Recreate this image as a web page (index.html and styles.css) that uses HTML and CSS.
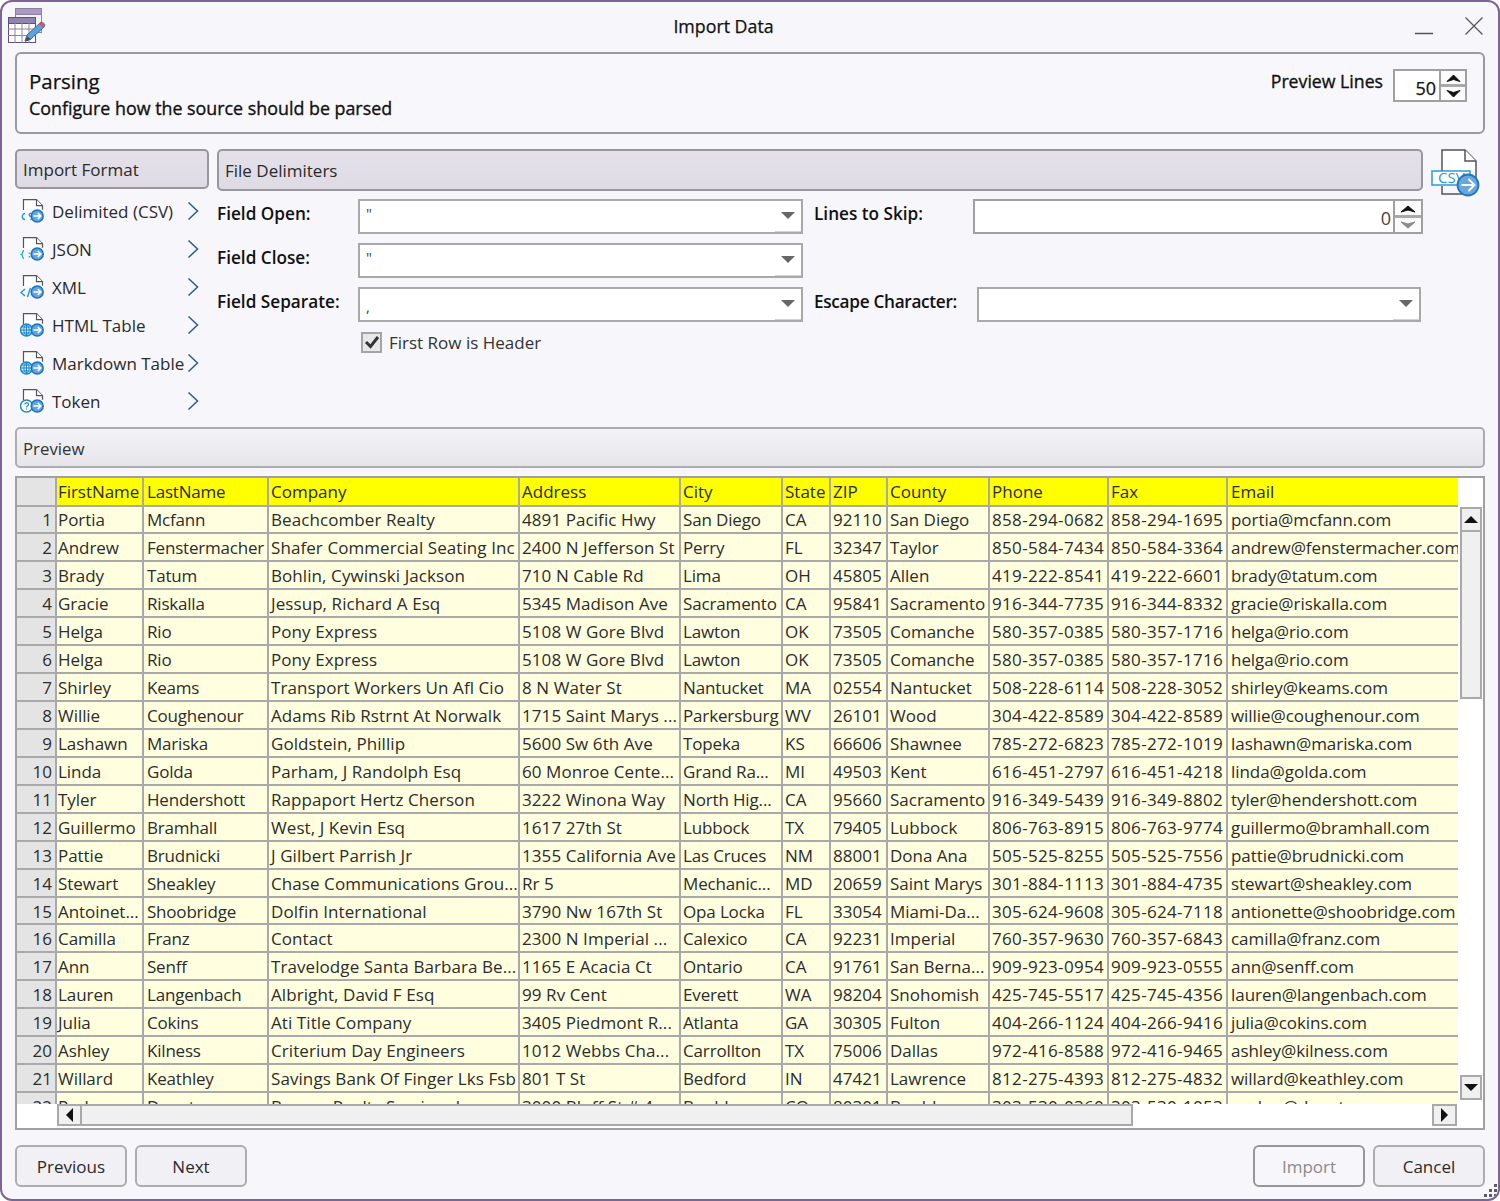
FILE: index.html
```html
<!DOCTYPE html>
<html lang="en">
<head>
<meta charset="utf-8">
<title>Import Data</title>
<link rel="stylesheet" href="styles.css">
</head>
<body>
<svg class="defs" width="0" height="0" aria-hidden="true">
  <symbol id="doc" viewBox="0 0 24 24">
    <path d="M3.500 11V.7h13l6 6v4" fill="#fff" stroke="#55535a" stroke-width="1.200"/>
    <path d="M16.500 .7v6h6" fill="#fff" stroke="#55535a" stroke-width="1.200"/>
  </symbol>
  <symbol id="go" viewBox="0 0 24 24">
    <circle cx="17.200" cy="17" r="6" fill="#63a5de" stroke="#1a72bd" stroke-width="1.500"/>
    <path d="M13.500 17h7M17.800 14l3 3-3 3" fill="none" stroke="#fff" stroke-width="1.600"/>
  </symbol>
  <symbol id="chev" viewBox="0 0 12 20">
    <path d="M1.500 1.500L10.500 10L1.500 18.500" fill="none" stroke="#2a5a96" stroke-width="1.500"/>
  </symbol>
  <symbol id="globe" viewBox="0 0 24 24">
    <circle cx="6.500" cy="17" r="6" fill="#d5e9f8" stroke="#1b87c9" stroke-width="1.400"/>
    <path d="M.5 17h12M6.500 11v12M1.500 14h10M1.500 20h10M6.500 11c-3.500 3-3.500 9 0 12M6.500 11c3.500 3 3.500 9 0 12" fill="none" stroke="#1b87c9"/>
  </symbol>
</svg>
<div class="window">
  <header class="titlebar">
    <svg class="app-icon" width="38" height="37" viewBox="0 0 38 37">
      <rect x="7.500" y="0.500" width="26" height="24" fill="#f4f2f8" stroke="#8d7fa8"/>
      <rect x="7.500" y="0.500" width="26" height="6" fill="#a99cc0" stroke="#8d7fa8"/>
      <rect x="0.500" y="9.500" width="27" height="25" fill="#fff" stroke="#5f4f80"/>
      <rect x="0.500" y="9.500" width="27" height="6" fill="#9284ad" stroke="#5f4f80"/>
      <path d="M0 21h28M0 27.500h28M7 15v20M14 15v20M21 15v20" stroke="#8f80aa"/>
      <path d="M17 33l2-6 13-12c1.500-1 3-.5 4 .5s1 2.500 0 3.500L23 31z" fill="#5da2d8" stroke="#356f9f"/>
      <path d="M32 14.500l4 4" stroke="#e2504c" stroke-width="3"/>
      <path d="M17 34l2-6 4 3.500z" fill="#4d4d55"/>
    </svg>
    <h1 class="window-title">Import Data</h1>
    <div class="window-controls">
      <svg width="18" height="18" viewBox="0 0 18 18"><path d="M0 16.500h18" stroke="#55535a" stroke-width="1.300"/></svg>
      <svg width="18" height="18" viewBox="0 0 18 18"><path d="M.5.500l17 17M17.500.500l-17 17" stroke="#55535a" stroke-width="1.200"/></svg>
    </div>
  </header>

  <section class="hero">
    <div class="hero-text">
      <div class="hero-title">Parsing</div>
      <div class="hero-sub">Configure how the source should be parsed</div>
    </div>
    <div class="preview-lines">
      <span class="preview-lines-label">Preview Lines</span>
      <div class="spin spin-small">
        <span class="spin-value">50</span>
        <div class="spin-btns">
          <span class="spin-btn"><svg width="15" height="10" viewBox="0 0 15 10"><path d="M1 8.500L7.500 2 14 8.500 7.500 6.500z" fill="#111" stroke="#111"/></svg></span>
          <span class="spin-btn"><svg width="15" height="10" viewBox="0 0 15 10"><path d="M1 1.500L7.500 8 14 1.500 7.500 3.500z" fill="#111" stroke="#111"/></svg></span>
        </div>
      </div>
    </div>
  </section>

  <div class="main">
    <aside class="formats">
      <div class="group-head group-head-format">Import Format</div>
      <ul class="format-list">
        <li class="format-item">
          <svg class="fi" width="24" height="24" viewBox="0 0 24 24"><use href="#doc"/><path d="M5 14.500a2.700 3 0 1 0 0 6M11 14.500c-2.500-.5-2.500 3 0 3s2 3-.5 3" fill="none" stroke="#1b97d6" stroke-width="1.300"/><use href="#go"/></svg>
          <span class="fl">Delimited (CSV)</span><svg class="chev" width="12" height="20"><use href="#chev"/></svg>
        </li>
        <li class="format-item">
          <svg class="fi" width="24" height="24" viewBox="0 0 24 24"><use href="#doc"/><path d="M4 13.500c-2 0-1 3.500-2.500 4 1.500.5.500 4 2.500 4" fill="none" stroke="#14b3c8" stroke-width="1.300"/><path d="M9.500 15.500v1.500M9.500 19v1.500" stroke="#14b3c8" stroke-width="1.500"/><use href="#go"/></svg>
          <span class="fl">JSON</span><svg class="chev" width="12" height="20"><use href="#chev"/></svg>
        </li>
        <li class="format-item">
          <svg class="fi" width="24" height="24" viewBox="0 0 24 24"><use href="#doc"/><path d="M5 14l-4 3.500 4 3.500M10.500 13l-3 9" fill="none" stroke="#1b97d6" stroke-width="1.400"/><use href="#go"/></svg>
          <span class="fl">XML</span><svg class="chev" width="12" height="20"><use href="#chev"/></svg>
        </li>
        <li class="format-item">
          <svg class="fi" width="24" height="24" viewBox="0 0 24 24"><use href="#doc"/><use href="#globe"/><use href="#go"/></svg>
          <span class="fl">HTML Table</span><svg class="chev" width="12" height="20"><use href="#chev"/></svg>
        </li>
        <li class="format-item">
          <svg class="fi" width="24" height="24" viewBox="0 0 24 24"><use href="#doc"/><use href="#globe"/><use href="#go"/></svg>
          <span class="fl">Markdown Table</span><svg class="chev" width="12" height="20"><use href="#chev"/></svg>
        </li>
        <li class="format-item">
          <svg class="fi" width="24" height="24" viewBox="0 0 24 24"><use href="#doc"/><circle cx="6.500" cy="17" r="6" fill="#fff" stroke="#1b87c9" stroke-width="1.400"/><path d="M4.800 15.500c.3-2.300 3.700-2 3.700 0 0 1.500-2 1.500-2 3M6.500 19.500v1" fill="none" stroke="#1b87c9" stroke-width="1.200"/><use href="#go"/></svg>
          <span class="fl">Token</span><svg class="chev" width="12" height="20"><use href="#chev"/></svg>
        </li>
      </ul>
    </aside>

    <div class="delims">
      <div class="group-head group-head-delims">File Delimiters</div>
      <div class="delim-form">
        <label class="field-label">Field Open:</label>
        <div class="combo"><span class="combo-text">"</span><span class="combo-arrow"><i class="tri"></i></span></div>
        <label class="field-label field-label-2">Lines to Skip:</label>
        <div class="spin spin-wide">
          <span class="spin-value spin-value-light">0</span>
          <div class="spin-btns spin-btns-thin">
            <span class="spin-btn"><svg width="16" height="9" viewBox="0 0 16 9"><path d="M1 8L8 2l7 6-7-2z" fill="#111" stroke="#111"/></svg></span>
            <span class="spin-btn"><svg width="16" height="9" viewBox="0 0 16 9"><path d="M1 1l7 6 7-6-7 2z" fill="#8a8a8a" stroke="#8a8a8a"/></svg></span>
          </div>
        </div>
        <label class="field-label">Field Close:</label>
        <div class="combo"><span class="combo-text">"</span><span class="combo-arrow"><i class="tri"></i></span></div>
        <span class="form-blank"></span>
        <label class="field-label">Field Separate:</label>
        <div class="combo"><span class="combo-text combo-text-low">,</span><span class="combo-arrow"><i class="tri"></i></span></div>
        <label class="field-label field-label-2 field-label-tight">Escape Character:</label>
        <div class="combo combo-escape"><span class="combo-text"></span><span class="combo-arrow"><i class="tri"></i></span></div>
        <div class="check-row">
          <span class="checkbox"><svg width="16" height="14" viewBox="0 0 16 14"><path d="M2 7l4.500 4.500L14 2" fill="none" stroke="#333" stroke-width="3"/></svg></span>
          <span>First Row is Header</span>
        </div>
      </div>
    </div>

    <svg class="csv-icon" width="49" height="49" viewBox="0 0 49 49">
      <path d="M11 31V1h23l11 11v20" fill="#fff" stroke="#55535a" stroke-width="1.500"/>
      <path d="M34 1v11h11" fill="#fff" stroke="#55535a" stroke-width="1.500"/>
      <path d="M11 37v8h22" fill="none" stroke="#55535a" stroke-width="1.500"/>
      <rect x="1" y="22" width="38" height="14" fill="#fff" stroke="#2a9ad8" stroke-width="1.500"/>
      <text x="7" y="34" class="csv-text">CSV</text>
      <circle cx="37" cy="36" r="10.500" fill="#6aa7dc" stroke="#1f76bd" stroke-width="1.800"/>
      <path d="M30.500 36h13M37.500 30l6 6-6 6" fill="none" stroke="#fff" stroke-width="1.800"/>
    </svg>
  </div>

  <div class="group-head group-head-preview">Preview</div>

  <div class="grid-box">
    <div class="table-clip">
      <table class="data">
        <colgroup>
          <col class="c0"><col class="c1"><col class="c2"><col class="c3"><col class="c4"><col class="c5"><col class="c6"><col class="c7"><col class="c8"><col class="c9"><col class="c10"><col class="c11">
        </colgroup>
        <thead>
          <tr class="hrow"><th class="rh"></th><th>FirstName</th><th>LastName</th><th>Company</th><th>Address</th><th>City</th><th>State</th><th>ZIP</th><th>County</th><th>Phone</th><th>Fax</th><th>Email</th></tr>
        </thead>
        <tbody>
          <tr class="first"><td class="rh">1</td><td>Portia</td><td>Mcfann</td><td>Beachcomber Realty</td><td>4891 Pacific Hwy</td><td>San Diego</td><td>CA</td><td>92110</td><td>San Diego</td><td>858-294-0682</td><td>858-294-1695</td><td>portia@mcfann.com</td></tr>
          <tr><td class="rh">2</td><td>Andrew</td><td>Fenstermacher</td><td>Shafer Commercial Seating Inc</td><td>2400 N Jefferson St</td><td>Perry</td><td>FL</td><td>32347</td><td>Taylor</td><td>850-584-7434</td><td>850-584-3364</td><td>andrew@fenstermacher.com</td></tr>
          <tr><td class="rh">3</td><td>Brady</td><td>Tatum</td><td>Bohlin, Cywinski Jackson</td><td>710 N Cable Rd</td><td>Lima</td><td>OH</td><td>45805</td><td>Allen</td><td>419-222-8541</td><td>419-222-6601</td><td>brady@tatum.com</td></tr>
          <tr><td class="rh">4</td><td>Gracie</td><td>Riskalla</td><td>Jessup, Richard A Esq</td><td>5345 Madison Ave</td><td>Sacramento</td><td>CA</td><td>95841</td><td>Sacramento</td><td>916-344-7735</td><td>916-344-8332</td><td>gracie@riskalla.com</td></tr>
          <tr><td class="rh">5</td><td>Helga</td><td>Rio</td><td>Pony Express</td><td>5108 W Gore Blvd</td><td>Lawton</td><td>OK</td><td>73505</td><td>Comanche</td><td>580-357-0385</td><td>580-357-1716</td><td>helga@rio.com</td></tr>
          <tr><td class="rh">6</td><td>Helga</td><td>Rio</td><td>Pony Express</td><td>5108 W Gore Blvd</td><td>Lawton</td><td>OK</td><td>73505</td><td>Comanche</td><td>580-357-0385</td><td>580-357-1716</td><td>helga@rio.com</td></tr>
          <tr><td class="rh">7</td><td>Shirley</td><td>Keams</td><td>Transport Workers Un Afl Cio</td><td>8 N Water St</td><td>Nantucket</td><td>MA</td><td>02554</td><td>Nantucket</td><td>508-228-6114</td><td>508-228-3052</td><td>shirley@keams.com</td></tr>
          <tr><td class="rh">8</td><td>Willie</td><td>Coughenour</td><td>Adams Rib Rstrnt At Norwalk</td><td>1715 Saint Marys ...</td><td>Parkersburg</td><td>WV</td><td>26101</td><td>Wood</td><td>304-422-8589</td><td>304-422-8589</td><td>willie@coughenour.com</td></tr>
          <tr><td class="rh">9</td><td>Lashawn</td><td>Mariska</td><td>Goldstein, Phillip</td><td>5600 Sw 6th Ave</td><td>Topeka</td><td>KS</td><td>66606</td><td>Shawnee</td><td>785-272-6823</td><td>785-272-1019</td><td>lashawn@mariska.com</td></tr>
          <tr><td class="rh">10</td><td>Linda</td><td>Golda</td><td>Parham, J Randolph Esq</td><td>60 Monroe Cente...</td><td>Grand Ra...</td><td>MI</td><td>49503</td><td>Kent</td><td>616-451-2797</td><td>616-451-4218</td><td>linda@golda.com</td></tr>
          <tr><td class="rh">11</td><td>Tyler</td><td>Hendershott</td><td>Rappaport Hertz Cherson</td><td>3222 Winona Way</td><td>North Hig...</td><td>CA</td><td>95660</td><td>Sacramento</td><td>916-349-5439</td><td>916-349-8802</td><td>tyler@hendershott.com</td></tr>
          <tr><td class="rh">12</td><td>Guillermo</td><td>Bramhall</td><td>West, J Kevin Esq</td><td>1617 27th St</td><td>Lubbock</td><td>TX</td><td>79405</td><td>Lubbock</td><td>806-763-8915</td><td>806-763-9774</td><td>guillermo@bramhall.com</td></tr>
          <tr><td class="rh">13</td><td>Pattie</td><td>Brudnicki</td><td>J Gilbert Parrish Jr</td><td>1355 California Ave</td><td>Las Cruces</td><td>NM</td><td>88001</td><td>Dona Ana</td><td>505-525-8255</td><td>505-525-7556</td><td>pattie@brudnicki.com</td></tr>
          <tr><td class="rh">14</td><td>Stewart</td><td>Sheakley</td><td>Chase Communications Grou...</td><td>Rr 5</td><td>Mechanic...</td><td>MD</td><td>20659</td><td>Saint Marys</td><td>301-884-1113</td><td>301-884-4735</td><td>stewart@sheakley.com</td></tr>
          <tr class="short"><td class="rh">15</td><td>Antoinet...</td><td>Shoobridge</td><td>Dolfin International</td><td>3790 Nw 167th St</td><td>Opa Locka</td><td>FL</td><td>33054</td><td>Miami-Da...</td><td>305-624-9608</td><td>305-624-7118</td><td>antionette@shoobridge.com</td></tr>
          <tr><td class="rh">16</td><td>Camilla</td><td>Franz</td><td>Contact</td><td>2300 N Imperial ...</td><td>Calexico</td><td>CA</td><td>92231</td><td>Imperial</td><td>760-357-9630</td><td>760-357-6843</td><td>camilla@franz.com</td></tr>
          <tr><td class="rh">17</td><td>Ann</td><td>Senff</td><td>Travelodge Santa Barbara Be...</td><td>1165 E Acacia Ct</td><td>Ontario</td><td>CA</td><td>91761</td><td>San Berna...</td><td>909-923-0954</td><td>909-923-0555</td><td>ann@senff.com</td></tr>
          <tr><td class="rh">18</td><td>Lauren</td><td>Langenbach</td><td>Albright, David F Esq</td><td>99 Rv Cent</td><td>Everett</td><td>WA</td><td>98204</td><td>Snohomish</td><td>425-745-5517</td><td>425-745-4356</td><td>lauren@langenbach.com</td></tr>
          <tr><td class="rh">19</td><td>Julia</td><td>Cokins</td><td>Ati Title Company</td><td>3405 Piedmont R...</td><td>Atlanta</td><td>GA</td><td>30305</td><td>Fulton</td><td>404-266-1124</td><td>404-266-9416</td><td>julia@cokins.com</td></tr>
          <tr><td class="rh">20</td><td>Ashley</td><td>Kilness</td><td>Criterium Day Engineers</td><td>1012 Webbs Cha...</td><td>Carrollton</td><td>TX</td><td>75006</td><td>Dallas</td><td>972-416-8588</td><td>972-416-9465</td><td>ashley@kilness.com</td></tr>
          <tr><td class="rh">21</td><td>Willard</td><td>Keathley</td><td>Savings Bank Of Finger Lks Fsb</td><td>801 T St</td><td>Bedford</td><td>IN</td><td>47421</td><td>Lawrence</td><td>812-275-4393</td><td>812-275-4832</td><td>willard@keathley.com</td></tr>
          <tr><td class="rh">22</td><td>Parker</td><td>Donato</td><td>Bergen Realty Services Inc</td><td>3000 Bluff St # 4</td><td>Boulder</td><td>CO</td><td>80301</td><td>Boulder</td><td>303-530-0360</td><td>303-530-1053</td><td>parker@donato.com</td></tr>
        </tbody>
      </table>
    </div>
    <div class="vscroll">
      <span class="sb-btn sb-btn-v"><i class="arr arr-up"></i></span>
      <span class="sb-thumb-v"></span>
      <span class="sb-fill"></span>
      <span class="sb-btn sb-btn-v"><i class="arr arr-down"></i></span>
    </div>
    <div class="hscroll">
      <span class="sb-btn sb-btn-h"><i class="arr arr-left"></i></span>
      <span class="sb-thumb-h"></span>
      <span class="sb-fill"></span>
      <span class="sb-btn sb-btn-h"><i class="arr arr-right"></i></span>
    </div>
  </div>

  <footer class="footer">
    <button class="btn">Previous</button>
    <button class="btn">Next</button>
    <span class="footer-gap"></span>
    <button class="btn btn-disabled">Import</button>
    <button class="btn">Cancel</button>
    <svg class="grip" width="16" height="16" viewBox="0 0 16 16"><path d="M12 1h3v3h-3zM7 6h3v3H7zM12 6h3v3h-3zM2 11h3v3H2zM7 11h3v3H7zM12 11h3v3h-3z" fill="#5c5a62"/></svg>
  </footer>
</div>
</body>
</html>
```
FILE: styles.css
```css
* { box-sizing: border-box; }
html, body { margin: 0; padding: 0; background: #fff; }
body { font-family: "Open Sans", "Noto Sans", sans-serif; font-size: 17px; color: #1a1a1a; }
.defs { position: absolute; }

.window {
  width: 1500px; height: 1201px; padding: 0 13px; position: relative;
  display: flex; flex-direction: column;
  background: #f7f6fa; border: 2px solid #7c6496; border-radius: 12px; overflow: hidden;
}

.titlebar { height: 50px; flex: none; display: flex; align-items: flex-start; position: relative; }
.app-icon { position: absolute; left: -7px; top: 6px; }
.window-title { margin: 14px 0 0; width: 100%; text-align: center; font-size: 17.800px; font-weight: 400; line-height: 20px; color: #111; padding-right: 53px; -webkit-text-stroke: .25px #111; }
.window-controls { position: absolute; right: 2px; top: 15px; display: flex; gap: 32px; }

.hero {
  height: 82px; flex: none; display: flex; justify-content: space-between;
  border: 2px solid #9a9a9e; border-radius: 6px; background: #f8f7fb; padding: 0 16px 0 12px;
}
.hero-title { font-size: 20.500px; line-height: 30px; margin-top: 12px; color: #111; -webkit-text-stroke: .25px #111; }
.hero-sub { font-size: 17.850px; line-height: 24px; color: #111; -webkit-text-stroke: .35px #111; }
.preview-lines { display: flex; align-items: flex-start; gap: 10px; padding-top: 12px; }
.preview-lines-label { font-size: 17.700px; line-height: 30px; color: #111; -webkit-text-stroke: .35px #111; }

.spin { display: flex; border: 2px solid #a0a0a0; background: #fff; }
.spin-small { width: 74px; height: 33px; margin-top: 3px; }
.spin-wide { width: 450px; height: 35px; }
.spin-value { flex: 1; text-align: right; padding: 3px 3px 0 0; line-height: 28px; font-size: 18px; color: #111; -webkit-text-stroke: .25px #111; }
.spin-value-light { color: #444; padding-right: 2px; -webkit-text-stroke: 0; }
.spin-btns { width: 26px; display: flex; flex-direction: column; border-left: 2px solid #a0a0a0; }
.spin-btns-thin { width: 28px; }
.spin-btn { flex: 1; display: flex; align-items: center; justify-content: center; background: #fbfbfb; }
.spin-btn + .spin-btn { border-top: 3px solid #a9a9a9; }

.main { height: 278px; margin-top: 15px; flex: none; display: flex; gap: 8px; }
.formats { width: 194px; flex: none; }
.group-head { border: 2px solid #99979e; border-radius: 5px; background: linear-gradient(#e4e1ea, #dedbe4); padding-left: 6px; font-size: 17px; color: #2a2a2a; display: flex; align-items: center; }
.group-head-format { height: 40px; }
.format-list { list-style: none; margin: 3px 0 0; padding: 0; }
.format-item { height: 38px; display: flex; align-items: center; padding: 0 10px 0 5px; color: #2a2a2a; }
.fi { flex: none; }
.fl { flex: 1; padding-left: 8px; font-size: 17px; white-space: nowrap; }
.chev { flex: none; }

.delims { width: 1206px; flex: none; }
.group-head-delims { height: 42px; }
.delim-form { display: grid; grid-template-columns: 141px 445px 170px 450px; grid-auto-rows: 35px; row-gap: 9px; margin-top: 8px; }
.field-label { font-size: 17.200px; font-weight: 600; color: #111; line-height: 29px; white-space: nowrap; }
.field-label-2 { padding-left: 11px; }
.field-label-tight { letter-spacing: -.3px; }
.form-blank { grid-column: span 2; }
.combo { display: flex; border: 2px solid #a9a9a9; background: #fff; }
.combo-escape { width: 444px; margin-left: 4px; }
.combo-text { flex: 1; font-size: 15px; line-height: 24px; padding-left: 6px; color: #444; }
.combo-text-low { padding-top: 5px; }
.combo-arrow { width: 26px; display: flex; align-items: center; justify-content: center; border-bottom: 1px solid #d2d2d2; padding-bottom: 1px; }
.tri { width: 0; height: 0; border-left: 7px solid transparent; border-right: 7px solid transparent; border-top: 7px solid #666; }
.check-row { grid-column: 2 / span 2; display: flex; align-items: center; gap: 7px; padding-left: 3px; height: 22px; font-size: 17px; color: #333; }
.checkbox { width: 21px; height: 21px; border: 2px solid #a4a4a4; background: #e7e7ea; display: flex; align-items: center; justify-content: center; }
.csv-icon { flex: none; }
.csv-text { font-size: 15px; fill: #2a9ad8; font-family: "Open Sans", sans-serif; }

.group-head-preview { height: 41px; flex: none; background: linear-gradient(#f4f3f7, #e6e5ea); border-color: #adadb0; color: #333; font-size: 16.800px; padding-top: 1px; }

.grid-box {
  height: 654px; margin-top: 8px; flex: none; border: 2px solid #a0a0a0; background: #fff;
  display: grid; grid-template-columns: 1441px 1fr; grid-template-rows: 626px 1fr;
}
.table-clip { overflow: hidden; }
table.data { table-layout: fixed; border-collapse: separate; border-spacing: 0; width: 1441px; font-size: 17px; color: #2c2c2c; }
.c0 { width: 40px; } .c1 { width: 87px; } .c2 { width: 125px; } .c3 { width: 251px; }
.c4 { width: 161px; } .c5 { width: 102px; } .c6 { width: 48px; } .c7 { width: 57px; }
.c8 { width: 102px; } .c9 { width: 119px; } .c10 { width: 119px; } .c11 { width: 230px; }
th, td { padding: 3px 0 0 2px; text-align: left; vertical-align: top; font-weight: 400; white-space: nowrap; overflow: hidden; border-right: 2px solid #a9a9a9; border-bottom: 2px solid #a9a9a9; line-height: 22px; background: #ffffe0; }
th { background: #ff0; height: 29px; padding-top: 2px; line-height: 24px; }
tbody tr { height: 28px; }
tbody tr.first, tbody tr.short { height: 27px; }
tbody tr.first td { padding-top: 2px; }
th:nth-child(2), td:nth-child(2) { padding-left: 1px; letter-spacing: -.05px; }
th:nth-child(3), td:nth-child(3) { padding-left: 3px; letter-spacing: -.2px; }
td:nth-child(4), td:nth-child(5) { letter-spacing: .08px; }
td:nth-child(6) { letter-spacing: -.15px; }
td:nth-child(10), td:nth-child(11) { letter-spacing: .33px; }
td:last-child { letter-spacing: -.05px; }
td:last-child, th:last-child { border-right: 0; padding-left: 3px; }
.rh { background: #e4e4e4; text-align: right; padding-left: 0; padding-right: 3px; }
th.rh { background: #e4e4e4; }

.vscroll { display: flex; flex-direction: column; padding: 29px 1px 4px 2px; }
.hscroll { grid-column: 1; display: flex; padding: 0 1px 2px 40px; }
.sb-btn { flex: none; display: flex; align-items: center; justify-content: center; border: 2px solid #a9a9a9; background: #f0f0f0; }
.sb-btn-v { height: 25px; }
.sb-btn-h { width: 25px; }
.sb-thumb-v { height: 167px; border: 2px solid #a9a9a9; border-top: 0; background: #f0f0f0; }
.sb-thumb-h { width: 1051px; border: 2px solid #a9a9a9; border-left: 0; background: #f0f0f0; }
.sb-fill { flex: 1; }
.arr { width: 0; height: 0; }
.arr-up { border-left: 7px solid transparent; border-right: 7px solid transparent; border-bottom: 7px solid #111; }
.arr-down { border-left: 7px solid transparent; border-right: 7px solid transparent; border-top: 7px solid #111; }
.arr-left { border-top: 7px solid transparent; border-bottom: 7px solid transparent; border-right: 7px solid #111; }
.arr-right { border-top: 7px solid transparent; border-bottom: 7px solid transparent; border-left: 7px solid #111; }

.footer { height: 42px; margin-top: 15px; flex: none; display: flex; gap: 8px; position: relative; }
.footer-gap { flex: 1; }
.btn { width: 112px; height: 42px; border: 2px solid #adadb0; border-radius: 6px; background: #f1f0f4; font: inherit; font-size: 17px; color: #2a2a2a; padding: 0; }
.btn-disabled { background: #f7f6fa; border-color: #98969c; color: #8a8a8a; }
.grip { position: absolute; right: -13px; bottom: -12px; }
```
